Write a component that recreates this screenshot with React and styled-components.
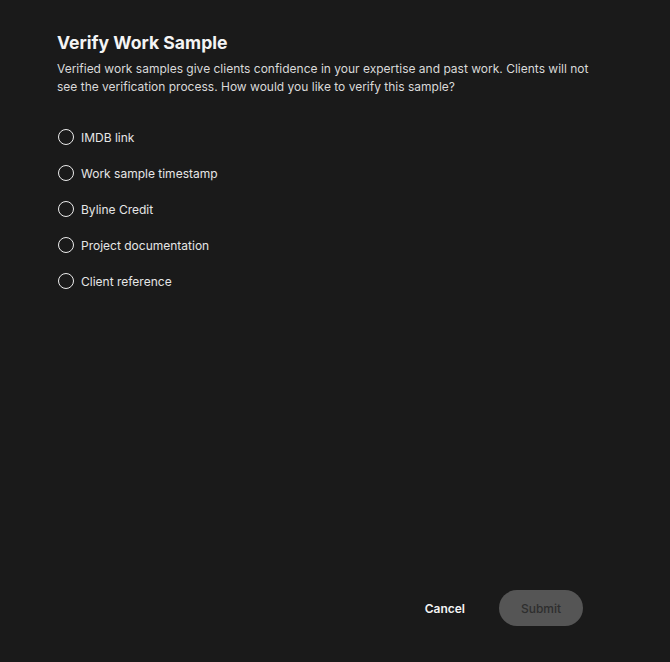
import React from "react";
import styled, { createGlobalStyle } from "styled-components";

const Global = createGlobalStyle`
  html, body { margin: 0; padding: 0; background: #1a1a1a; }
  body { font-family: Inter, "Noto Sans", sans-serif; -webkit-font-smoothing: antialiased; }
  * { box-sizing: border-box; }
`;

const Page = styled.div`
  min-height: 662px;
  display: flex;
  flex-direction: column;
  background: #1a1a1a;
  padding: 31px 57px 36px 57px;
`;

const Title = styled.h1`
  margin: 0;
  font-size: 17.6px;
  line-height: 24px;
  font-weight: 700;
  color: #f4f4f4;
`;

const Description = styled.p`
  margin: 5px 0 0;
  max-width: 535px;
  font-size: 12px;
  line-height: 18px;
  color: #d9d9d9;
`;

const OptionList = styled.div`
  display: flex;
  flex-direction: column;
  margin-top: 23px;
`;

const Option = styled.label`
  display: flex;
  align-items: center;
  gap: 7px;
  height: 36px;
  cursor: pointer;
`;

const Radio = styled.span`
  width: 16px;
  height: 16px;
  margin-left: 1px;
  border-radius: 50%;
  border: 1.6px solid #ececec;
  flex: none;
`;

const OptionText = styled.span`
  font-size: 12px;
  color: #e6e6e6;
`;

const Footer = styled.div`
  margin-top: auto;
  display: flex;
  justify-content: flex-end;
  align-items: center;
  padding-right: 30px;
`;

const TextButton = styled.button`
  background: none;
  border: none;
  font-family: inherit;
  font-size: 12px;
  font-weight: 600;
  color: #f4f4f4;
  padding: 0 34px;
  height: 36px;
  cursor: pointer;
`;

const PillButton = styled.button`
  background: #555555;
  border: none;
  border-radius: 18px;
  height: 36px;
  width: 84px;
  font-family: inherit;
  font-size: 12px;
  font-weight: 500;
  color: #2e2e2e;
  cursor: not-allowed;
`;

const options = [
  "IMDB link",
  "Work sample timestamp",
  "Byline Credit",
  "Project documentation",
  "Client reference",
];

export default function App() {
  return (
    <>
      <Global />
      <Page>
        <Title>Verify Work Sample</Title>
        <Description>
          Verified work samples give clients confidence in your expertise and past work. Clients will not
          see the verification process. How would you like to verify this sample?
        </Description>
        <OptionList>
          {options.map((o) => (
            <Option key={o}>
              <Radio />
              <OptionText>{o}</OptionText>
            </Option>
          ))}
        </OptionList>
        <Footer>
          <TextButton>Cancel</TextButton>
          <PillButton disabled>Submit</PillButton>
        </Footer>
      </Page>
    </>
  );
}
